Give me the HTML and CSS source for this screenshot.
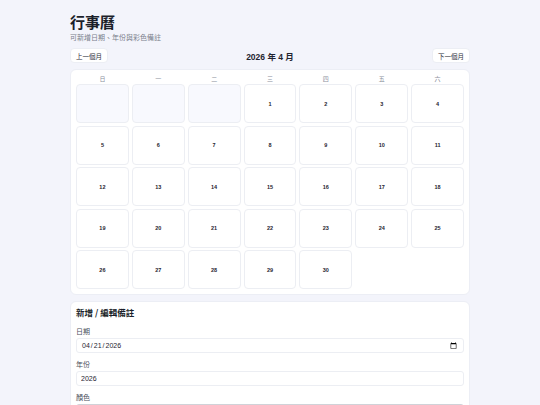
FILE: index.html
```html
<!DOCTYPE html>
<html lang="zh-Hant">
<head>
<meta charset="utf-8">
<title>行事曆</title>
<link rel="stylesheet" href="styles.css">
</head>
<body>
<div class="wrap">
  <header class="head">
    <h1 class="title">行事曆</h1>
    <p class="sub">可新增日期、年份與彩色備註</p>
  </header>
  <div class="nav">
    <button class="btn">上一個月</button>
    <div class="month">2026 年 4 月</div>
    <button class="btn">下一個月</button>
  </div>
  <section class="card cal">
    <div class="week">
      <span>日</span><span>一</span><span>二</span><span>三</span><span>四</span><span>五</span><span>六</span>
    </div>
    <div class="grid">
      <div class="cell empty"></div><div class="cell empty"></div><div class="cell empty"></div>
      <div class="cell">1</div><div class="cell">2</div><div class="cell">3</div><div class="cell">4</div>
      <div class="cell">5</div><div class="cell">6</div><div class="cell">7</div><div class="cell">8</div><div class="cell">9</div><div class="cell">10</div><div class="cell">11</div>
      <div class="cell">12</div><div class="cell">13</div><div class="cell">14</div><div class="cell">15</div><div class="cell">16</div><div class="cell">17</div><div class="cell">18</div>
      <div class="cell">19</div><div class="cell">20</div><div class="cell">21</div><div class="cell">22</div><div class="cell">23</div><div class="cell">24</div><div class="cell">25</div>
      <div class="cell">26</div><div class="cell">27</div><div class="cell">28</div><div class="cell">29</div><div class="cell">30</div>
    </div>
  </section>
  <section class="card form">
    <h2 class="ftitle">新增 / 編輯備註</h2>
    <label class="lbl">日期</label>
    <input class="inp" type="date" value="2026-04-21">
    <label class="lbl">年份</label>
    <input class="inp" type="text" value="2026">
    <label class="lbl">顏色</label>
    <input class="color" type="color" value="#cccccc">
  </section>
</div>
</body>
</html>
```
FILE: styles.css
```css
html, body {
  margin: 0;
  padding: 0;
  background: #f3f4fb;
}
body {
  font-family: "Liberation Sans", "Noto Sans CJK TC", sans-serif;
  color: #1f2430;
}
.wrap {
  width: 400px;
  margin: 0 auto;
  padding-top: 12px;
}
.head {
  display: flex;
  flex-direction: column;
}
.title {
  margin: 0;
  font-family: "Noto Sans CJK TC", sans-serif;
  font-size: 15px;
  line-height: 20px;
  font-weight: 700;
  color: #1b1f2a;
}
.sub {
  margin: 0;
  font-family: "Noto Sans CJK TC", sans-serif;
  font-size: 7px;
  line-height: 10px;
  color: #7a7f8c;
}
.nav {
  display: flex;
  justify-content: space-between;
  align-items: center;
  margin-top: 6px;
}
.btn {
  font-family: "Noto Sans CJK TC", sans-serif;
  font-size: 6.5px;
  line-height: 9px;
  padding: 3px 5px;
  height: 15px;
  background: #fff;
  border: 1px solid #eceef4;
  border-radius: 4px;
  color: #2a2e38;
}
.month {
  font-size: 8.5px;
  font-weight: 700;
  font-family: "Liberation Sans", "Noto Sans CJK TC", sans-serif;
}
.card {
  background: #fff;
  border: 1px solid #eceef5;
  border-radius: 6px;
  box-sizing: border-box;
}
.cal {
  margin-top: 6px;
  padding: 4px 5px 5px;
}
.week {
  display: grid;
  grid-template-columns: repeat(7, 1fr);
  column-gap: 3px;
  text-align: center;
  font-family: "Noto Sans CJK TC", sans-serif;
  font-size: 6px;
  line-height: 9px;
  color: #8a8f9c;
}
.grid {
  display: grid;
  grid-template-columns: repeat(7, 1fr);
  grid-auto-rows: 39px;
  gap: 2.5px 3px;
  margin-top: 1px;
}
.cell {
  border: 1px solid #eceef3;
  border-radius: 4px;
  display: flex;
  align-items: center;
  justify-content: center;
  font-size: 5.5px;
  font-weight: 700;
  color: #1f2430;
}
.cell.empty {
  background: #f8f9fe;
}
.form {
  margin-top: 6px;
  padding: 4px 5px 4px;
  display: flex;
  flex-direction: column;
}
.ftitle {
  margin: 0;
  font-family: "Noto Sans CJK TC", sans-serif;
  font-size: 8.5px;
  line-height: 12px;
  font-weight: 700;
  color: #1b1f2a;
}
.lbl {
  font-family: "Noto Sans CJK TC", sans-serif;
  font-size: 7px;
  line-height: 10px;
  color: #4b505c;
  margin-top: 6px;
}
.ftitle + .lbl {
  margin-top: 8px;
}
.inp {
  margin-top: 2px;
  height: 15px;
  box-sizing: border-box;
  border: 1px solid #eceef3;
  border-radius: 3px;
  padding: 0 4px;
  font-family: "Liberation Sans", sans-serif;
  font-size: 7px;
  line-height: 13px;
  color: #1f2430;
  background: #fff;
}
.color {
  margin-top: 2px;
  height: 15px;
  width: 100%;
  box-sizing: border-box;
  padding: 1px;
  border: 1px solid #d0d2d8;
  border-radius: 3px;
  background: #e6e7ea;
}
```
